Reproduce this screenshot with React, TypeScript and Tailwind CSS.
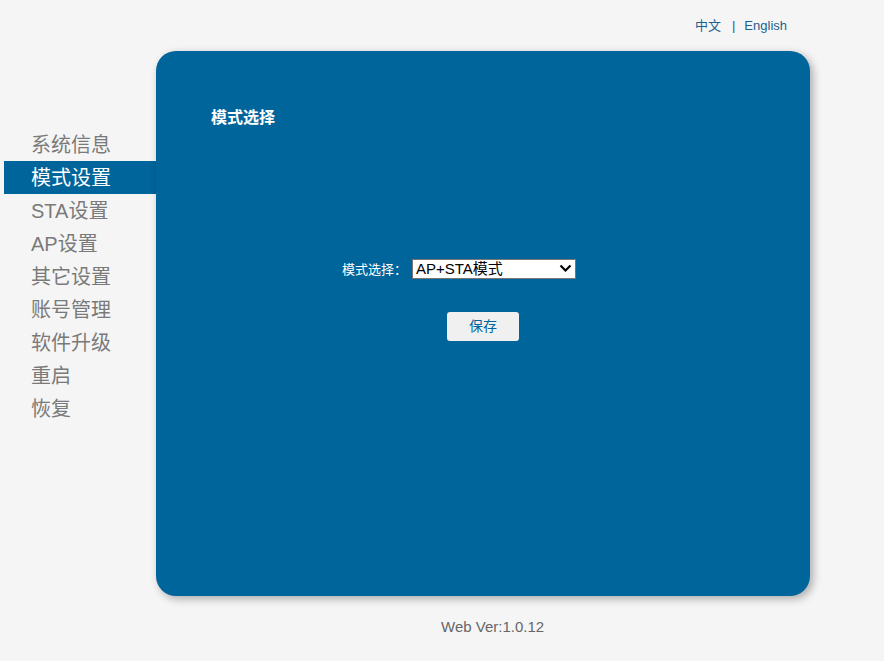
import { useState } from "react";

const MENU = ["系统信息", "模式设置", "STA设置", "AP设置", "其它设置", "账号管理", "软件升级", "重启", "恢复"];

const FONT = { fontFamily: '"Liberation Sans", "Noto Sans CJK SC", sans-serif' };

export default function App() {
  const [active, setActive] = useState(1);
  const [mode, setMode] = useState("apsta");

  return (
    <div className="w-[884px] h-[661px] bg-[#f5f5f5] overflow-hidden" style={FONT}>
      {/* language links */}
      <div className="h-[51px] flex justify-end items-start pt-[16px] pr-[97px] text-[13px] text-[#1d5f91]">
        <span>中文</span>
        <span className="ml-[11px] mr-[9px]">|</span>
        <span>English</span>
      </div>

      <div className="flex">
        {/* sidebar */}
        <ul className="w-[152px] ml-[4px] mt-[77px] flex flex-col">
          {MENU.map((m, i) => (
            <li
              key={m}
              onClick={() => setActive(i)}
              className={`h-[33px] pl-[27px] flex items-center text-[20px] leading-none cursor-pointer ${
                i === active ? "bg-[#00659a] text-white" : "text-[#7a7a7a]"
              }`}
            >
              {m}
            </li>
          ))}
        </ul>

        {/* main panel */}
        <div className="w-[654px] h-[545px] bg-[#00659a] rounded-[20px] shadow-[3px_3px_8px_rgba(0,0,0,0.3)] pt-[57px] pl-[55px]">
          <h2 className="text-[16px] font-bold text-white leading-[20px]">模式选择</h2>

          <div className="mt-[131px] ml-[131px] flex items-center text-[13px] text-white">
            <span>模式选择：</span>
            <div className="relative ml-[5px]">
              <select
                value={mode}
                onChange={e => setMode(e.target.value)}
                className="appearance-none w-[164px] h-[20px] bg-white text-black text-[15px] leading-[18px] border border-[#767676] pl-[3px]"
                style={FONT}
              >
                <option value="ap">AP模式</option>
                <option value="sta">STA模式</option>
                <option value="apsta">AP+STA模式</option>
              </select>
              <svg
                className="absolute right-[4px] top-[5px] pointer-events-none"
                width="13"
                height="9"
                viewBox="0 0 13 9"
              >
                <path d="M1.5 1.5 L6.5 6.5 L11.5 1.5" fill="none" stroke="#000" strokeWidth="2.2" />
              </svg>
            </div>
          </div>

          <button className="mt-[32px] ml-[236px] w-[72px] h-[29px] bg-[#f0f0f0] rounded-[3px] text-[14px] text-[#00659a]">
            保存
          </button>
        </div>
      </div>

      <div className="pl-[441px] mt-[20px] text-[15px] text-[#666]">Web Ver:1.0.12</div>
    </div>
  );
}
